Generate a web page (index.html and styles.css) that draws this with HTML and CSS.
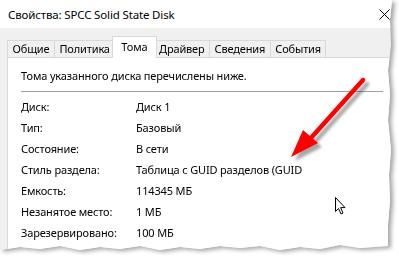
FILE: index.html
```html
<!DOCTYPE html>
<html lang="ru">

<head>
    <meta charset="UTF-8">
    <title>Свойства: SPCC Solid State Disk</title>
    <link rel="stylesheet" href="styles.css">
</head>

<body>
    <div class="shot">
        <div class="paper">
            <div class="window">
                <div class="titlebar">
                    <span class="title">Свойства: SPCC Solid State Disk</span>
                    <svg class="close" width="11" height="11" viewBox="0 0 11 11">
                        <path d="M0.5 0.5 L10.5 10.5 M10.5 0.5 L0.5 10.5" stroke="#000" stroke-width="1" fill="none" />
                    </svg>
                </div>
                <div class="dialog">
                    <div class="tabs">
                        <div class="tab">Общие</div>
                        <div class="tab">Политика</div>
                        <div class="tab tab-active">Тома</div>
                        <div class="tab">Драйвер</div>
                        <div class="tab">Сведения</div>
                        <div class="tab">События</div>
                    </div>
                    <div class="panel">
                        <p class="intro">Тома указанного диска перечислены ниже.</p>
                        <div class="sep"></div>
                        <div class="props">
                            <div class="prop-label">Диск:</div>
                            <div class="prop-value">Диск 1</div>
                            <div class="prop-label">Тип:</div>
                            <div class="prop-value">Базовый</div>
                            <div class="prop-label">Состояние:</div>
                            <div class="prop-value">В сети</div>
                            <div class="prop-label">Стиль раздела:</div>
                            <div class="prop-value">Таблица с GUID разделов (GUID</div>
                            <div class="prop-label">Емкость:</div>
                            <div class="prop-value">114345 МБ</div>
                            <div class="prop-label">Незанятое место:</div>
                            <div class="prop-value">1 МБ</div>
                            <div class="prop-label">Зарезервировано:</div>
                            <div class="prop-value">100 МБ</div>
                        </div>
                    </div>
                </div>
            </div>
        </div>

        <!-- стрелка -->
        <svg class="arrow" width="110" height="110" viewBox="0 0 110 110">
            <defs>
                <filter id="arrowShadow" x="-20%" y="-20%" width="150%" height="150%">
                    <feGaussianBlur stdDeviation="1.6" />
                </filter>
            </defs>
            <g transform="translate(4 4)" fill="#000" opacity="0.35" filter="url(#arrowShadow)">
                <path d="M83 10 L30 69" stroke="#000" stroke-width="4.5" stroke-linecap="round" />
                <polygon points="11,87 23,60 38,73" />
            </g>
            <path d="M83 10 L30 69" stroke="#ff0000" stroke-width="4.5" stroke-linecap="round" />
            <polygon points="11,87 23,60 38,73" fill="#ff0000" />
        </svg>

        <!-- курсор -->
        <svg class="cursor" width="14" height="20" viewBox="0 0 14 20">
            <path d="M1.5 1.5 L1.5 15.5 L4.5 12.5 L7 18 L9 17 L6.6 11.6 L11 11.6 Z" fill="#fff" stroke="#000" stroke-width="1" stroke-linejoin="miter" />
        </svg>
    </div>
</body>

</html>
```

FILE: styles.css
```css
body {
    margin: 0;
    background-color: #fff;
    font-family: "Noto Sans", "Open Sans", sans-serif;
    font-size: 11px;
    letter-spacing: -0.15px;
    color: #000;
}

.shot {
    position: relative;
    width: 399px;
    height: 256px;
    overflow: hidden;
}

.paper {
    filter: drop-shadow(3px 2px 2px rgba(0, 0, 0, 0.35));
}

.window {
    width: 400px;
    height: 252px;
    background-color: #f0f0f0;
    clip-path: polygon(0 0, 392px 0, 390px 20px, 391px 45px, 388px 70px, 390px 95px, 388px 120px, 391px 150px, 389px 175px, 390px 200px, 388px 225px, 388px 246px,
        360px 248px, 340px 245px, 320px 249px, 300px 247px, 280px 250px, 260px 246px, 240px 248px, 220px 246px, 200px 249px, 180px 247px, 160px 250px, 140px 246px,
        120px 249px, 100px 247px, 80px 250px, 60px 246px, 40px 249px, 20px 247px, 0 250px);
}

.titlebar {
    height: 28px;
    background-color: #fff;
    display: flex;
    align-items: center;
    justify-content: space-between;
    padding: 0 10px 0 8px;
}

.title {
    font-size: 11.5px;
}

.dialog {
    padding: 8px 0 0 7px;
}

.tabs {
    display: flex;
    align-items: flex-end;
    height: 21px;
    padding-left: 1px;
}

.tab {
    height: 16px;
    line-height: 15px;
    padding: 0 4.5px;
    border: 1px solid #d9d9d9;
    border-bottom: none;
    margin-left: -1px;
    background-color: #f0f0f0;
}

.tab-active {
    height: 21px;
    line-height: 19px;
    padding: 0 8px;
    margin: 0 -2px 0 -3px;
    background-color: #fff;
    position: relative;
    z-index: 1;
    margin-bottom: -1px;
}

.panel {
    background-color: #fff;
    border: 1px solid #d9d9d9;
    height: 200px;
    padding: 9px 0 0 13px;
}

.intro {
    margin: 0;
    line-height: 18px;
}

.sep {
    height: 1px;
    background-color: #a0a0a0;
    width: 362px;
    margin: 6px 0 4px;
}

.props {
    display: grid;
    grid-template-columns: 115px auto;
    grid-auto-rows: 21px;
    align-items: center;
}

.arrow {
    position: absolute;
    left: 280px;
    top: 70px;
}

.cursor {
    position: absolute;
    left: 334px;
    top: 196px;
}
```
